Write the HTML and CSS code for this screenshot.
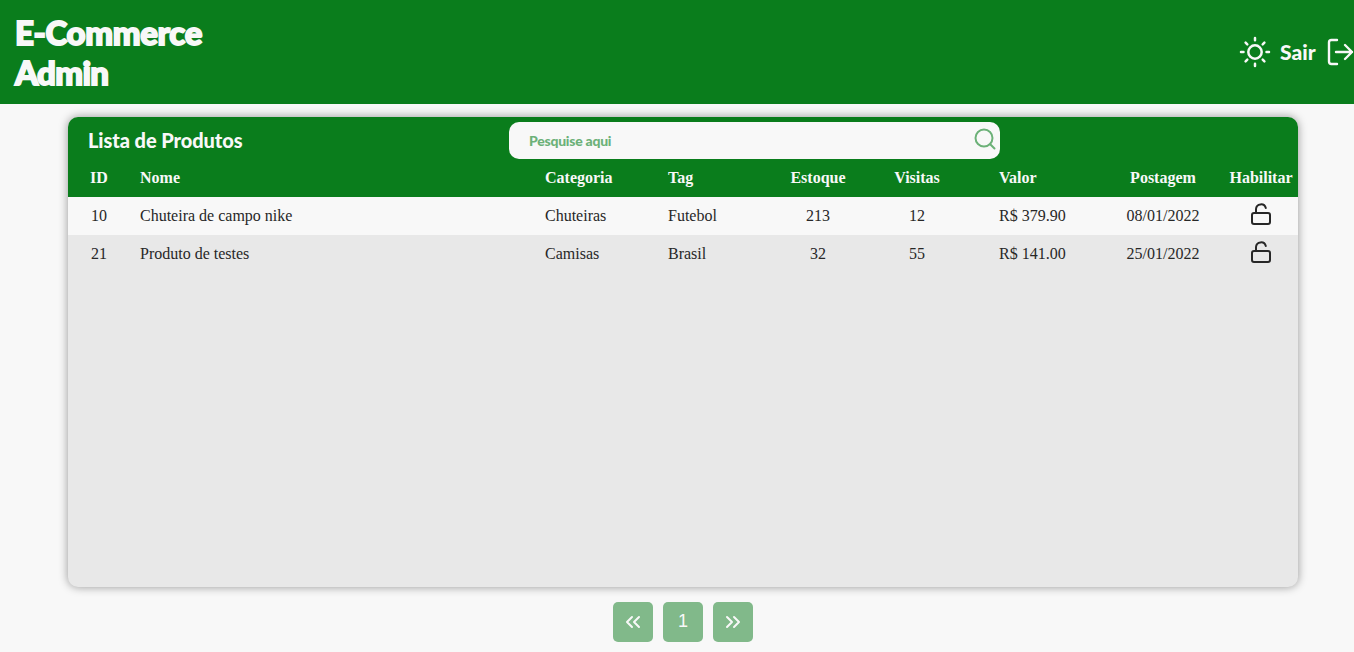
FILE: index.html
```html
<!DOCTYPE html>
<html lang="pt-BR">
<head>
<meta charset="utf-8">
<title>E-Commerce Admin</title>
<link rel="stylesheet" href="styles.css">
</head>
<body>
<header class="topbar">
  <h1 class="brand"><span class="brand-first">E-Commerce</span><br><span class="brand-second">Admin</span></h1>
  <div class="actions">
    <svg class="icon sun" viewBox="0 0 32 32"><circle cx="16" cy="16" r="6.7"/><path d="M16 2v2.200M16 27.800V30M2 16h2.500M27.500 16H30M6.600 6.600l1.700 1.700M23.700 23.700l1.700 1.700M25.400 6.600l-1.700 1.700M8.300 23.700l-1.700 1.700"/></svg>
    <span class="logout">Sair</span>
    <svg class="icon exit" viewBox="0 0 28 28"><path d="M10 2H4.500Q2 2 2 4.500v19Q2 26 4.500 26H10M9 14h16M18 7l7 7-7 7"/></svg>
  </div>
</header>
<main>
  <section class="panel">
    <div class="panel-head">
      <h2 class="panel-title">Lista de Produtos</h2>
      <label class="search">
        <input class="search-input" type="text" placeholder="Pesquise aqui">
        <svg class="icon lens" viewBox="0 0 24 24"><circle cx="11" cy="11" r="8.500"/><path d="M17.200 17.200l4.300 4.300"/></svg>
      </label>
    </div>
    <div class="row head"><span class="center">ID</span><span>Nome</span><span>Categoria</span><span>Tag</span><span class="center">Estoque</span><span class="center">Visitas</span><span class="value">Valor</span><span class="center">Postagem</span><span class="center">Habilitar</span></div>
    <div class="row light"><span class="center">10</span><span>Chuteira de campo nike</span><span>Chuteiras</span><span>Futebol</span><span class="center">213</span><span class="center">12</span><span class="value">R$ 379.90</span><span class="center">08/01/2022</span><span class="center lock-cell"><svg class="icon lock" viewBox="0 0 24 24"><rect x="3" y="11" width="18" height="11" rx="2"/><path d="M7 11V7a5 5 0 0 1 9.800-1"/></svg></span></div>
    <div class="row"><span class="center">21</span><span>Produto de testes</span><span>Camisas</span><span>Brasil</span><span class="center">32</span><span class="center">55</span><span class="value">R$ 141.00</span><span class="center">25/01/2022</span><span class="center lock-cell"><svg class="icon lock" viewBox="0 0 24 24"><rect x="3" y="11" width="18" height="11" rx="2"/><path d="M7 11V7a5 5 0 0 1 9.800-1"/></svg></span></div>
  </section>
  <nav class="pager">
    <button class="page"><svg class="icon chevrons" viewBox="0 0 20 20"><path d="M9 5l-5 5 5 5M16 5l-5 5 5 5"/></svg></button>
    <button class="page number">1</button>
    <button class="page"><svg class="icon chevrons" viewBox="0 0 20 20"><path d="M4 5l5 5-5 5M11 5l5 5-5 5"/></svg></button>
  </nav>
</main>
</body>
</html>
```
FILE: styles.css
```css
* { box-sizing: border-box; }
body {
  margin: 0;
  height: 652px;
  overflow: hidden;
  background: #f8f8f8;
  color: #272727;
  font: 16px "Liberation Serif", serif;
}
.icon {
  display: block;
  flex: none;
  fill: none;
  stroke: currentColor;
  stroke-width: 2;
  stroke-linecap: round;
  stroke-linejoin: round;
}
.topbar {
  display: flex;
  justify-content: space-between;
  height: 104px;
  padding-left: 15px;
  background: #0a7d1c;
  color: #f8f8f8;
}
.brand {
  margin: 0;
  padding-top: 12px;
  font: 900 33px/40px Lato, sans-serif;
  -webkit-text-stroke: 1.8px #f8f8f8;
}
.brand-first { letter-spacing: -0.35px; }
.brand-second { letter-spacing: -0.7px; }
.actions { display: flex; align-items: center; }
.sun { width: 32px; height: 32px; margin-right: 9px; stroke-width: 2.5; }
.logout { width: 36px; font: 900 21px/24px Lato, sans-serif; white-space: nowrap; }
.exit { width: 28px; height: 28px; margin: 0 -1px 0 11px; stroke-width: 2.4; }
.panel {
  width: 1230px;
  height: 470px;
  margin: 13px 0 0 68px;
  overflow: hidden;
  border-radius: 10px;
  background: #e8e8e8;
  box-shadow: 0 0 10px rgba(0, 0, 0, .4);
}
.panel-head {
  display: flex;
  height: 42px;
  padding-left: 20px;
  background: #0a7d1c;
  color: #f8f8f8;
}
.panel-title {
  width: 421px;
  margin: 0;
  font: 900 20px/47px Lato, sans-serif;
  letter-spacing: -0.08px;
}
.search {
  display: flex;
  width: 491px;
  height: 37px;
  margin-top: 5px;
  padding: 0 3px 0 20px;
  border-radius: 10px;
  background: #f8f8f8;
  color: #6cb178;
}
.search-input {
  flex: 1;
  padding: 0;
  border: 0;
  outline: 0;
  background: none;
  font: 900 14px Lato, sans-serif;
  letter-spacing: -0.25px;
}
.search-input::placeholder { color: #6cb178; }
.lens { width: 24px; height: 24px; margin-top: 5px; }
.row {
  display: grid;
  grid-template-columns: 62px 405px 123px 111px 98px 100px 135px 122px 74px;
  height: 38px;
  line-height: 38px;
  white-space: nowrap;
}
.row > span { padding-left: 10px; }
.row > .center { padding: 0; text-align: center; }
.row > .value { padding-left: 32px; }
.head { background: #0a7d1c; color: #f8f8f8; font-weight: bold; }
.light { background: #f8f8f8; }
.lock-cell { display: flex; justify-content: center; }
.lock { width: 24px; height: 24px; margin-top: 5px; }
.pager {
  display: flex;
  justify-content: center;
  gap: 10px;
  padding: 15px 0 0 12px;
}
.page {
  display: flex;
  align-items: center;
  justify-content: center;
  width: 40px;
  height: 40px;
  padding: 0;
  border: 0;
  border-radius: 5px;
  background: #81b98a;
  color: #f8f8f8;
}
.number { padding-bottom: 2px; font: 18px "Liberation Sans", sans-serif; }
.chevrons { width: 20px; height: 20px; }
```
